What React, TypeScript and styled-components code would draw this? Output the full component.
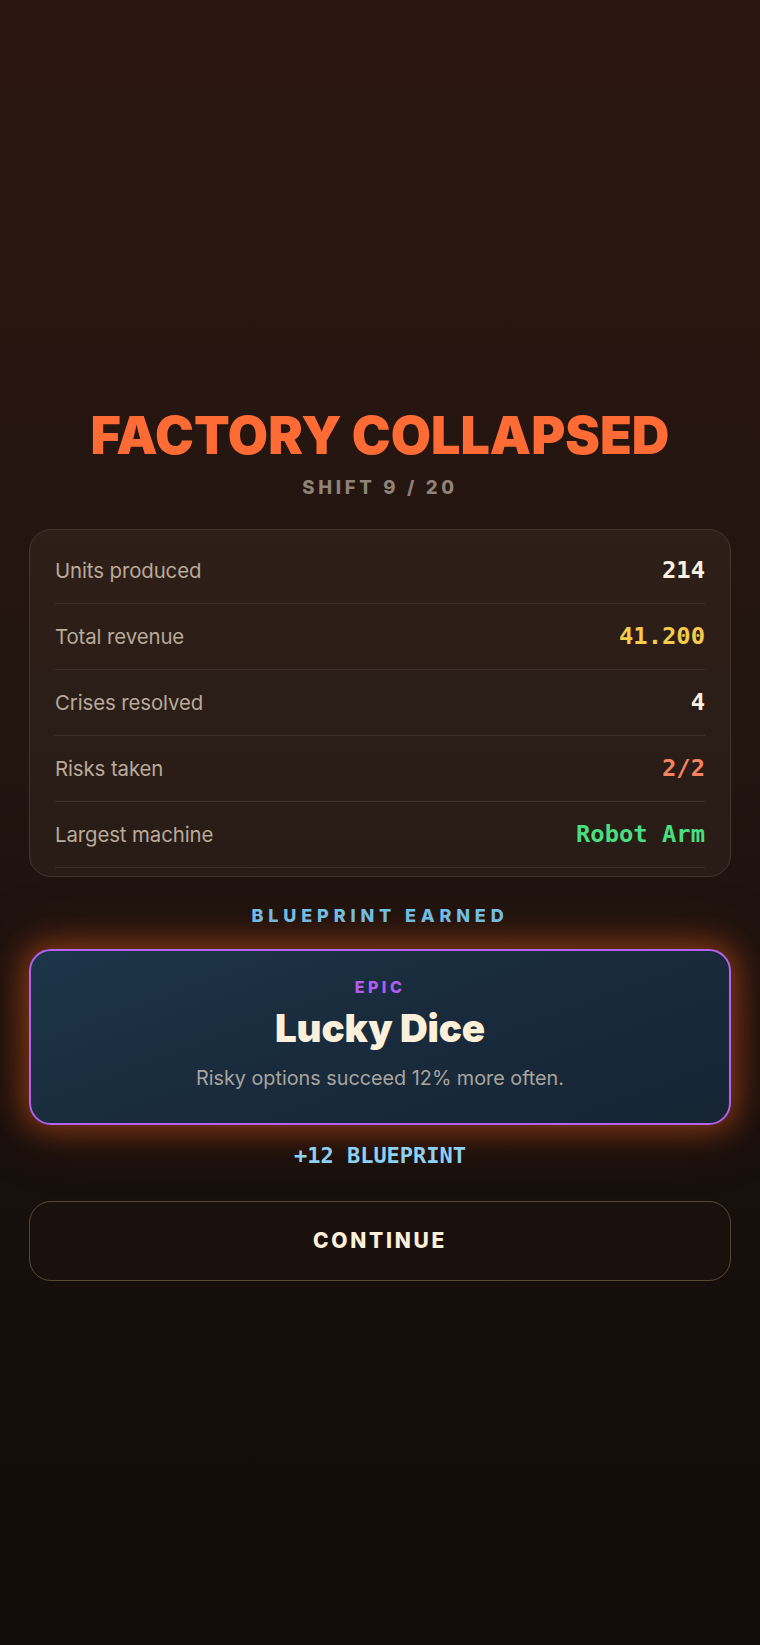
import React from 'react';
import styled, { createGlobalStyle } from 'styled-components';

const GlobalStyle = createGlobalStyle`
  html, body {
    margin: 0;
    padding: 0;
    background: #130e0a;
  }
  * {
    box-sizing: border-box;
  }
`;

const Page = styled.main`
  min-height: 1645px;
  padding: 410px 29px 0;
  display: flex;
  flex-direction: column;
  align-items: stretch;
  background: linear-gradient(180deg, #2b1610 0%, #221510 45%, #150e0b 80%, #120d0a 100%);
  font-family: Inter, 'Liberation Sans', sans-serif;
`;

const Title = styled.h1`
  margin: 0;
  font-size: 52px;
  line-height: 1;
  font-weight: 900;
  text-align: center;
  color: #ff6b35;
  letter-spacing: 0;
`;

const Subtitle = styled.div`
  margin-top: 16px;
  font-size: 18.5px;
  line-height: 1;
  font-weight: 800;
  letter-spacing: 0.2em;
  text-align: center;
  color: #8f8278;
`;

const StatsCard = styled.section`
  margin-top: 32px;
  padding: 8px 25px;
  border: 1.5px solid #44352c;
  border-radius: 22px;
  background: linear-gradient(180deg, #2e1f18 0%, #281c16 100%);
`;

const Row = styled.div`
  height: 66px;
  display: flex;
  align-items: center;
  justify-content: space-between;
  border-bottom: 1.5px solid #3e3028;
`;

const Label = styled.span`
  font-size: 20.4px;
  letter-spacing: -0.005em;
  color: #b9aa9b;
`;

const Value = styled.span<{ $color: string }>`
  font-family: 'DejaVu Sans Mono', 'Liberation Mono', monospace;
  font-weight: 700;
  font-size: 23.8px;
  color: ${p => p.$color};
`;

const Earned = styled.div`
  margin-top: 30px;
  font-size: 18px;
  line-height: 1;
  font-weight: 800;
  letter-spacing: 0.27em;
  text-align: center;
  color: #72c6f2;
`;

const Blueprint = styled.section`
  margin-top: 24px;
  padding: 28px 24px 31px;
  border: 2px solid #b462f0;
  border-radius: 22px;
  background: linear-gradient(160deg, #1d3549 0%, #182a3b 55%, #172534 100%);
  box-shadow: 0 0 28px 6px rgba(230, 90, 30, 0.45), 0 0 60px 10px rgba(140, 50, 15, 0.25);
  display: flex;
  flex-direction: column;
  align-items: center;
`;

const Rarity = styled.div`
  font-size: 16px;
  line-height: 1;
  font-weight: 800;
  letter-spacing: 0.22em;
  color: #b35cf0;
`;

const CardName = styled.h2`
  margin: 12px 0 0;
  font-size: 38.5px;
  line-height: 1.1;
  font-weight: 900;
  letter-spacing: -0.005em;
  color: #fcf0da;
`;

const Desc = styled.p`
  margin: 17px 0 0;
  font-size: 19.8px;
  line-height: 1.3;
  letter-spacing: 0;
  color: #a9a59e;
`;

const Reward = styled.div`
  margin-top: 20px;
  font-family: 'DejaVu Sans Mono', 'Liberation Mono', monospace;
  font-weight: 700;
  font-size: 22px;
  line-height: 1;
  text-align: center;
  color: #8dd1f5;
`;

const ContinueButton = styled.button`
  margin-top: 34px;
  height: 80px;
  border: 1.5px solid #5a4836;
  border-radius: 22px;
  background: #1a110d;
  font-family: Inter, 'Liberation Sans', sans-serif;
  font-size: 21px;
  font-weight: 800;
  letter-spacing: 0.13em;
  color: #fcf0da;
  cursor: pointer;
`;

const stats = [
  { label: 'Units produced', value: '214', color: '#fbf1de' },
  { label: 'Total revenue', value: '41.200', color: '#f7cb4a' },
  { label: 'Crises resolved', value: '4', color: '#fbf1de' },
  { label: 'Risks taken', value: '2/2', color: '#f4835f' },
  { label: 'Largest machine', value: 'Robot Arm', color: '#4ade80' },
];

export default function App() {
  return (
    <>
      <GlobalStyle />
      <Page>
        <Title>FACTORY COLLAPSED</Title>
        <Subtitle>SHIFT 9 / 20</Subtitle>
        <StatsCard>
          {stats.map(s => (
            <Row key={s.label}>
              <Label>{s.label}</Label>
              <Value $color={s.color}>{s.value}</Value>
            </Row>
          ))}
        </StatsCard>
        <Earned>BLUEPRINT EARNED</Earned>
        <Blueprint>
          <Rarity>EPIC</Rarity>
          <CardName>Lucky Dice</CardName>
          <Desc>Risky options succeed 12% more often.</Desc>
        </Blueprint>
        <Reward>+12 BLUEPRINT</Reward>
        <ContinueButton>CONTINUE</ContinueButton>
      </Page>
    </>
  );
}
